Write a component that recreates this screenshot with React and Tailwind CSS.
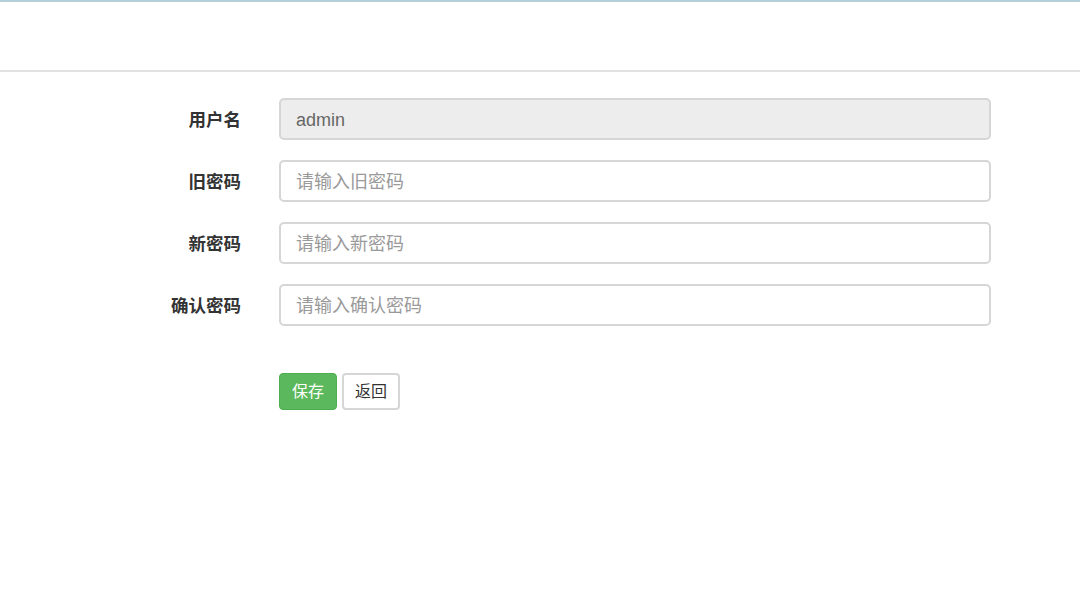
import React from "react";

const font = { fontFamily: '"Liberation Sans", "Noto Sans CJK SC", sans-serif' };

function Row({ label, children }) {
  return (
    <div className="flex items-center h-[42px]">
      <label className="w-[241px] text-right font-bold text-[17.5px] text-[#333] pt-[2px]">{label}</label>
      <div className="ml-[38px] w-[712px]">{children}</div>
    </div>
  );
}

export default function App() {
  const inputCls =
    "w-full h-[42px] px-[15px] pt-[2px] text-[18px] text-[#555] border-2 border-[#d6d6d6] rounded-[5px] outline-none placeholder:text-[#9a9a9a]";
  return (
    <div className="w-[1080px] h-[611px] bg-white overflow-hidden" style={font}>
      <div className="h-[72px] border-t-2 border-[#b5cfdb] border-b-2 border-b-[#e2e2e2]" />
      <div className="pt-[26px] flex flex-col gap-[20px]">
        <Row label="用户名">
          <input className={inputCls + " bg-[#ededed] text-[#666]"} value="admin" disabled readOnly />
        </Row>
        <Row label="旧密码">
          <input className={inputCls + " bg-white"} placeholder="请输入旧密码" type="password" />
        </Row>
        <Row label="新密码">
          <input className={inputCls + " bg-white"} placeholder="请输入新密码" type="password" />
        </Row>
        <Row label="确认密码">
          <input className={inputCls + " bg-white"} placeholder="请输入确认密码" type="password" />
        </Row>
      </div>
      <div className="flex gap-[5px] ml-[279px] mt-[47px]">
        <button className="w-[58px] h-[37px] bg-[#5cb85c] border border-[#4cae4c] rounded-[4px] text-white text-[16px]">保存</button>
        <button className="w-[58px] h-[37px] bg-white border-2 border-[#d6d6d6] rounded-[4px] text-[#333] text-[16px]">返回</button>
      </div>
    </div>
  );
}
